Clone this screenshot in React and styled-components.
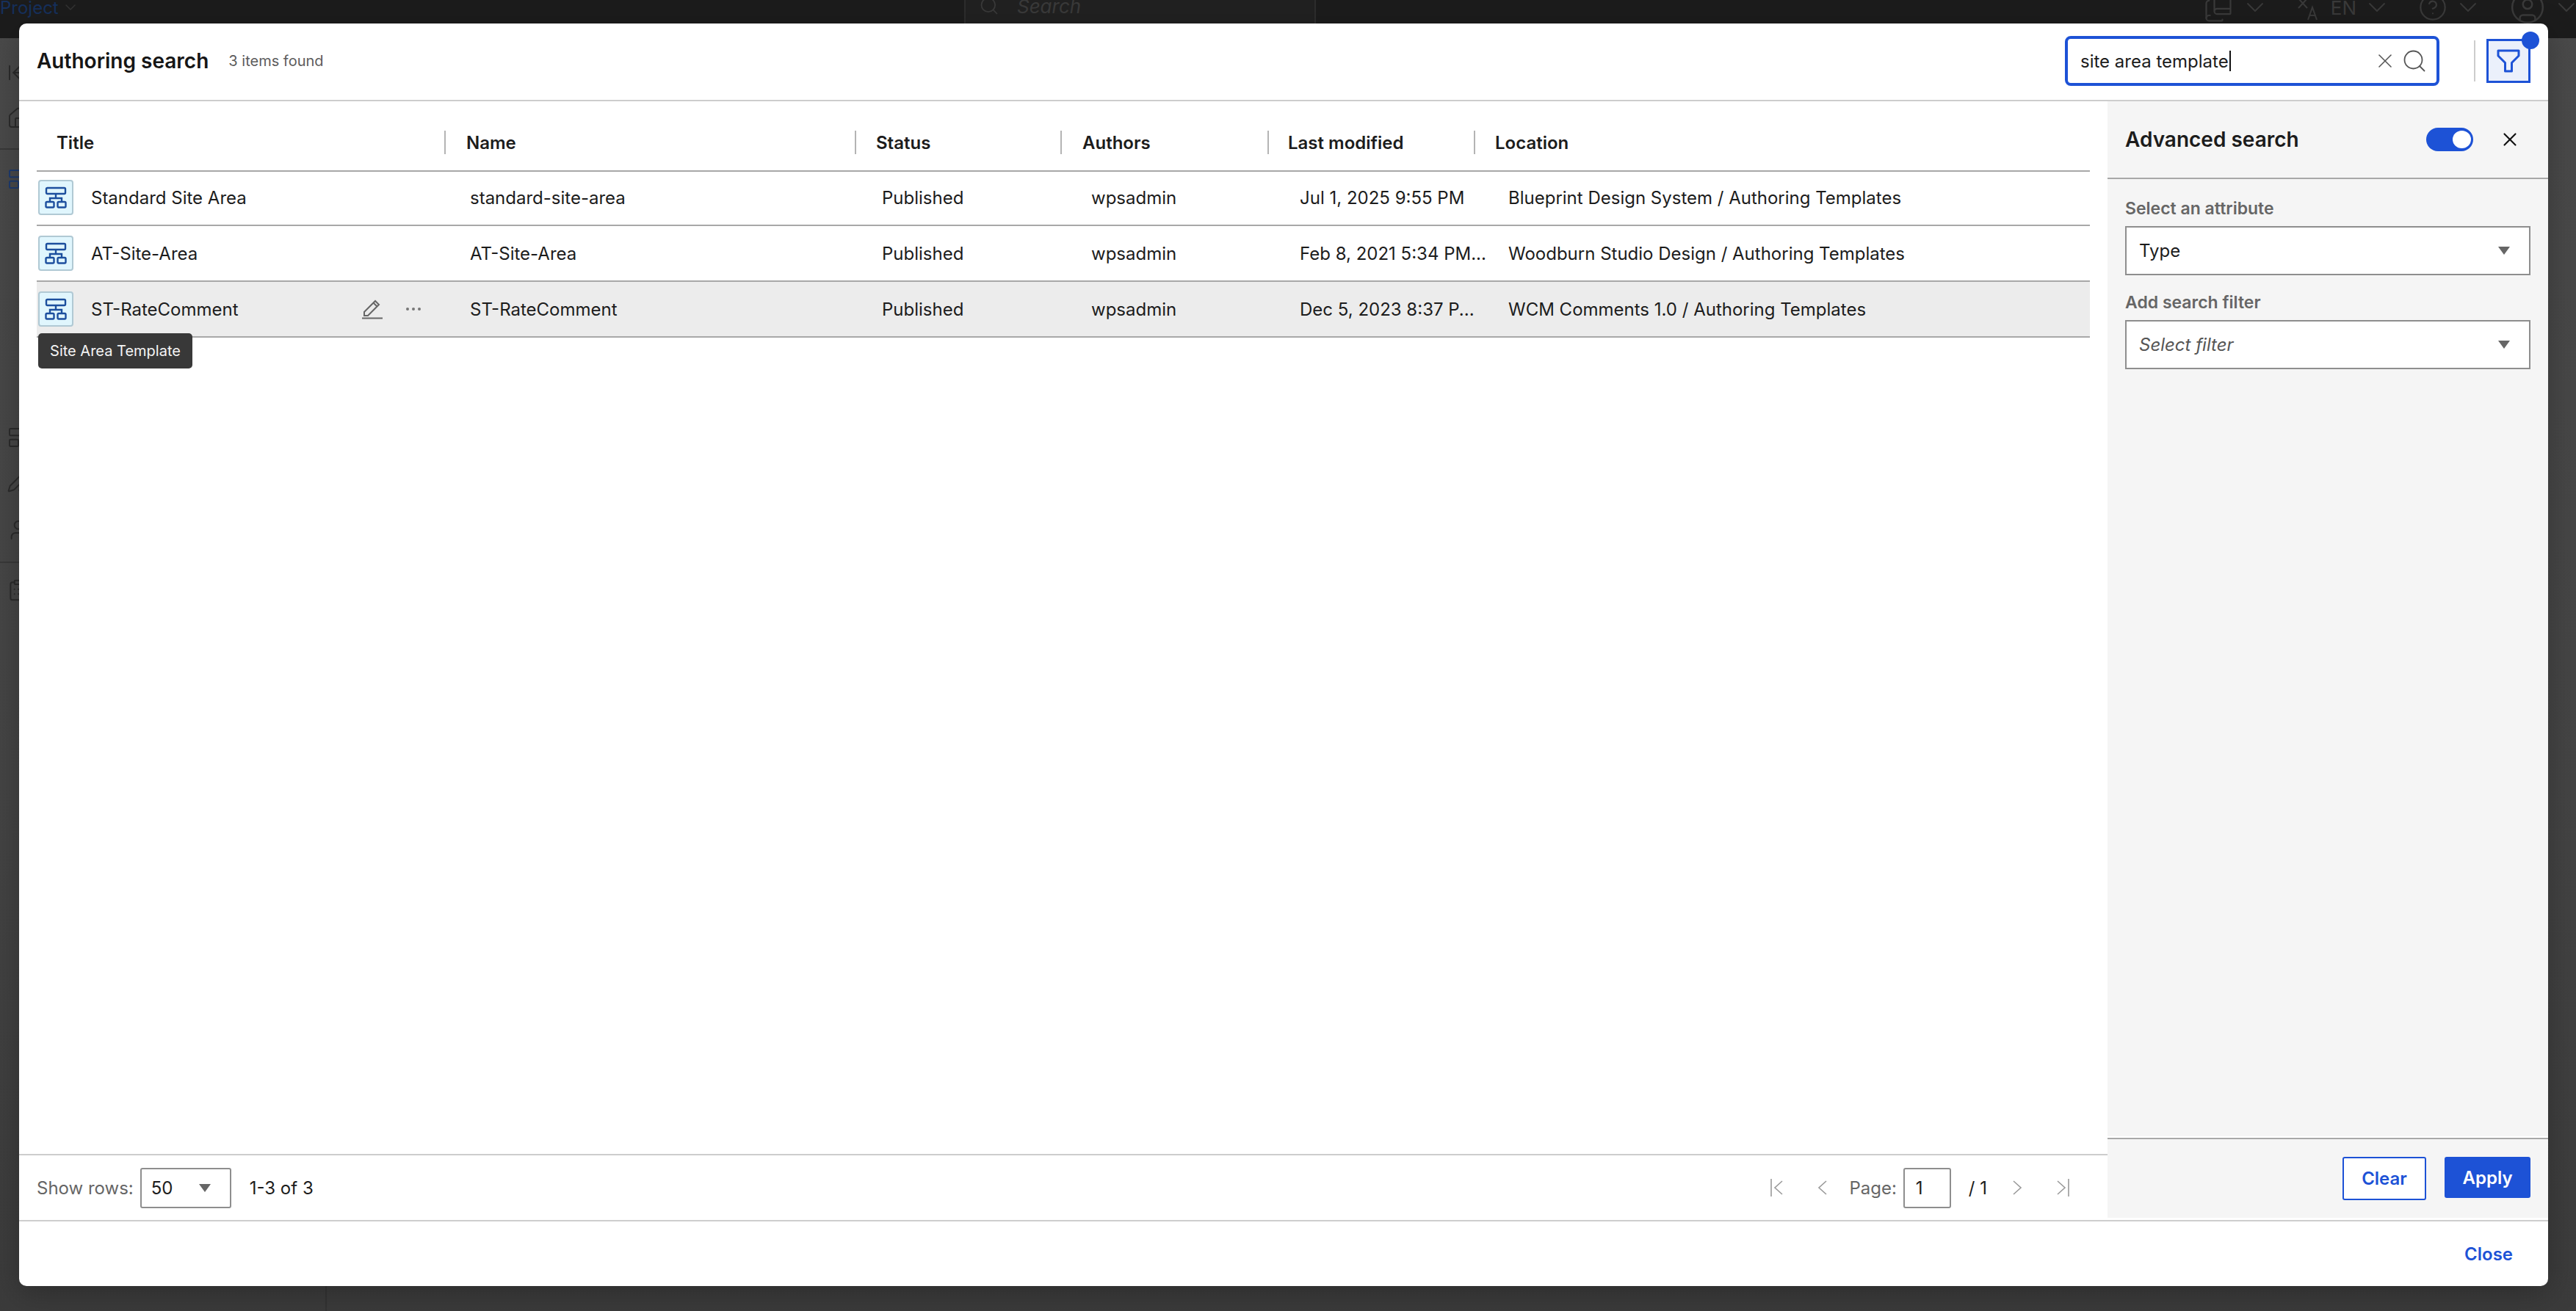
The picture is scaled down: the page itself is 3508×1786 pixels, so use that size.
import React from 'react'
import styled, { createGlobalStyle } from 'styled-components'
import { ArrowLeftToLine, Home, Search, X, ChevronDown, CircleHelp, CircleUser, BookCopy, LayoutTemplate, PenLine, User, ClipboardList } from 'lucide-react'

const GlobalStyle = createGlobalStyle`
    html, body {
        margin: 0;
        padding: 0;
        height: 100%;
        overflow: hidden;
        background: #474747;
        font-family: Inter, "Liberation Sans", sans-serif;
        color: #1c1c1c;
    }
    * {
        box-sizing: border-box;
    }
`

const columns = '555px 559px 280px 282px 281px 1fr'

const headers = [
    { label: 'Title', pad: 27, first: true },
    { label: 'Name', pad: 28 },
    { label: 'Status', pad: 27 },
    { label: 'Authors', pad: 28 },
    { label: 'Last modified', pad: 26 },
    { label: 'Location', pad: 27 },
]

const rows = [
    { title: 'Standard Site Area', name: 'standard-site-area', modified: 'Jul 1, 2025 9:55 PM', location: 'Blueprint Design System / Authoring Templates', first: true },
    { title: 'AT-Site-Area', name: 'AT-Site-Area', modified: 'Feb 8, 2021 5:34 PM...', location: 'Woodburn Studio Design / Authoring Templates' },
    { title: 'ST-RateComment', name: 'ST-RateComment', modified: 'Dec 5, 2023 8:37 P...', location: 'WCM Comments 1.0 / Authoring Templates', hovered: true },
]

function SiteAreaIcon() {
    return (
        <svg width="30" height="30" viewBox="0 0 30 30" fill="none" stroke="#1c4f9e" strokeWidth="2.4">
            <rect x="2" y="2" width="26" height="8" rx="1.5" />
            <path d="M15 10v6M7 21v-5h16v5" />
            <rect x="1.5" y="21" width="11" height="7.5" rx="1.5" />
            <rect x="17.5" y="21" width="11" height="7.5" rx="1.5" />
        </svg>
    )
}

function FilterIcon() {
    return (
        <svg width="32" height="32" viewBox="0 0 32 32" fill="none" stroke="#1d52d6" strokeWidth="3" strokeLinejoin="round">
            <path d="M2 2h28v7L20.500 18.500V30h-9V18.500L2 9z" />
        </svg>
    )
}

function EditIcon() {
    return (
        <svg width="28" height="27" viewBox="0 0 28 27" fill="none" stroke="#666" strokeWidth="2">
            <path d="M3 22v-5L18 2l5 5L8 22z" />
            <path d="M15.500 4.500l5 5" />
            <path d="M0 25.500h28" />
        </svg>
    )
}

// thin page arrows, flip turns the "first/prev" pair into "next/last"
function PageArrow({ edge, flip }) {
    return (
        <PageArrowSvg width={edge ? 18 : 14} height="24" viewBox={edge ? '0 0 18 24' : '0 0 14 24'} fill="none" stroke="#999" strokeWidth="1.6" $flip={flip}>
            {edge && <path d="M1 0v24" />}
            <path d={edge ? 'M16 3L6 12l10 9' : 'M12 3L2 12l10 9'} />
        </PageArrowSvg>
    )
}

function TranslateIcon() {
    return (
        <svg width="32" height="36" viewBox="0 0 32 36" fill="none" stroke="currentColor" strokeWidth="2">
            <path d="M1 2h16M3 6l12 13M15 6L3 19" />
            <path d="M16 35l6-17 6 17M18 29h8" />
        </svg>
    )
}

function App() {
    return (
        <Page>
            <GlobalStyle />
            <TopBar>
                <Brand>
                    Project
                    <ChevronDown size={24} strokeWidth={1.5} />
                </Brand>
                <BackSearch>
                    <Search size={28} strokeWidth={1.5} />
                    <span>Search</span>
                </BackSearch>
                <TopTools>
                    <BookCopy size={44} strokeWidth={1.2} />
                    <TopChevron size={40} strokeWidth={1.1} />
                    <TranslateIcon />
                    <EnLabel>EN</EnLabel>
                    <TopChevron size={40} strokeWidth={1.1} />
                    <CircleHelp size={40} strokeWidth={1.3} />
                    <TopChevron size={40} strokeWidth={1.1} />
                    <CircleUser size={50} strokeWidth={1.2} />
                    <TopChevron size={40} strokeWidth={1.1} />
                </TopTools>
            </TopBar>
            <SideLine />
            <BackRail>
                <RailIcon $gap={0}><ArrowLeftToLine size={32} strokeWidth={1.5} /></RailIcon>
                <RailIcon $gap={30}><Home size={32} strokeWidth={1.5} /></RailIcon>
                <RailRule $gap={25} />
                <RailIcon $gap={24} $active><LayoutTemplate size={32} strokeWidth={1.5} /></RailIcon>
                <RailIcon $gap={320}><LayoutTemplate size={32} strokeWidth={1.5} /></RailIcon>
                <RailIcon $gap={28}><PenLine size={32} strokeWidth={1.5} /></RailIcon>
                <RailIcon $gap={34}><User size={32} strokeWidth={1.5} /></RailIcon>
                <RailRule $gap={27} />
                <RailIcon $gap={21}><ClipboardList size={32} strokeWidth={1.5} /></RailIcon>
            </BackRail>

            <Modal>
                <ModalHeader>
                    <ModalTitle>Authoring search</ModalTitle>
                    <ItemCount>3 items found</ItemCount>
                    <SearchBox>
                        <SearchText>site area template<Caret /></SearchText>
                        <X size={32} strokeWidth={1.2} color="#555" />
                        <Search size={36} strokeWidth={1.2} color="#555" />
                    </SearchBox>
                    <HeaderDivider />
                    <FilterButton>
                        <FilterIcon />
                        <FilterBadge />
                    </FilterButton>
                </ModalHeader>

                <ModalBody>
                    <Results>
                        <TableArea>
                            <HeadRow>
                                {headers.map(h => (
                                    <HeadCell key={h.label} $pad={h.pad} $first={h.first}>{h.label}</HeadCell>
                                ))}
                            </HeadRow>
                            {rows.map(r => (
                                <Row key={r.name} $hovered={r.hovered} $first={r.first}>
                                    <TitleCell>
                                        <TypeBadge><SiteAreaIcon /></TypeBadge>
                                        {r.title}
                                        {r.hovered && (
                                            <RowActions>
                                                <EditIcon />
                                                <Dots>
                                                    <i /><i /><i />
                                                </Dots>
                                            </RowActions>
                                        )}
                                        {r.hovered && <Tooltip>Site Area Template</Tooltip>}
                                    </TitleCell>
                                    <Cell $pad={35}>{r.name}</Cell>
                                    <Cell $pad={37}>Published</Cell>
                                    <Cell $pad={42}>wpsadmin</Cell>
                                    <Cell $pad={44}>{r.modified}</Cell>
                                    <Cell $pad={47}>{r.location}</Cell>
                                </Row>
                            ))}
                        </TableArea>
                        <Pager>
                            <MutedLabel>Show rows:</MutedLabel>
                            <RowsSelect>
                                50
                                <Arrow />
                            </RowsSelect>
                            <RangeLabel>1-3 of 3</RangeLabel>
                            <PageNav>
                                <PageArrow edge />
                                <PageArrow />
                                <PageField>
                                    <MutedLabel>Page:</MutedLabel>
                                    <PageInput>1</PageInput>
                                    <span>/ 1</span>
                                </PageField>
                                <PageArrow flip />
                                <PageArrow edge flip />
                            </PageNav>
                        </Pager>
                    </Results>

                    <Panel>
                        <PanelHead>
                            <PanelTitle>Advanced search</PanelTitle>
                            <Toggle><Knob /></Toggle>
                            <X size={30} strokeWidth={1.7} color="#111" />
                        </PanelHead>
                        <PanelBody>
                            <FieldLabel>Select an attribute</FieldLabel>
                            <PanelSelect>
                                Type
                                <Arrow />
                            </PanelSelect>
                            <FieldLabel>Add search filter</FieldLabel>
                            <PanelSelect $placeholder>
                                Select filter
                                <Arrow />
                            </PanelSelect>
                        </PanelBody>
                        <PanelFooter>
                            <ClearButton>Clear</ClearButton>
                            <ApplyButton>Apply</ApplyButton>
                        </PanelFooter>
                    </Panel>
                </ModalBody>

                <ModalFooter>
                    <CloseLink>Close</CloseLink>
                </ModalFooter>
            </Modal>
        </Page>
    )
}

export default App

const Page = styled.div`
    width: 3508px;
    height: 1786px;
    position: relative;
    overflow: hidden;
    background: linear-gradient(180deg, #4a4a4a 0%, #444 60%, #3b3b3b 100%);
`

const TopBar = styled.div`
    height: 52px;
    background: #1c1c1c;
    display: flex;
    align-items: flex-start;
    color: #3a3a3a;
    overflow: hidden;
`

const Brand = styled.div`
    width: 1313px;
    height: 20px;
    flex: none;
    display: flex;
    align-items: center;
    gap: 4px;
    font-size: 24px;
    color: #16305c;
    svg {
        color: #333;
    }
`

const BackSearch = styled.div`
    width: 479px;
    height: 52px;
    flex: none;
    display: flex;
    align-items: flex-start;
    gap: 24px;
    padding-left: 18px;
    background: #212121;
    border-left: 2px solid #2d2d2d;
    border-right: 2px solid #2d2d2d;
    font-size: 26px;
    font-style: italic;
    line-height: 18px;
    svg {
        margin-top: -6px;
    }
`

const TopTools = styled.div`
    margin-left: auto;
    margin-right: -7px;
    height: 20px;
    display: flex;
    align-items: center;
    font-size: 26px;
`

const TopChevron = styled(ChevronDown)`
    margin: 0 36px 0 8px;
    &:last-child {
        margin-right: 0;
    }
`

const EnLabel = styled.span`
    margin-left: 15px;
`

const SideLine = styled.div`
    position: absolute;
    left: 443px;
    top: 52px;
    bottom: 0;
    width: 2px;
    background: #333;
`

const BackRail = styled.div`
    position: absolute;
    left: 0;
    top: 83px;
    width: 26px;
    display: flex;
    flex-direction: column;
    overflow: hidden;
    color: #2b2b2b;
`

const RailIcon = styled.div`
    height: 32px;
    flex: none;
    margin-top: ${p => p.$gap}px;
    padding-left: 9px;
    color: ${p => (p.$active ? '#1d3a6e' : 'inherit')};
`

const RailRule = styled.div`
    height: 2px;
    flex: none;
    margin-top: ${p => p.$gap}px;
    background: #383838;
`

const Modal = styled.div`
    position: absolute;
    left: 26px;
    top: 32px;
    width: 3444px;
    height: 1720px;
    background: #fff;
    border-radius: 10px;
    box-shadow: 0 10px 40px rgba(0, 0, 0, 0.25);
    display: flex;
    flex-direction: column;
`

const ModalHeader = styled.div`
    height: 106px;
    flex: none;
    display: flex;
    align-items: center;
    padding: 0 24px 2px;
    border-bottom: 2px solid #cdcdcd;
`

const ModalTitle = styled.h1`
    margin: 0;
    font-size: 28px;
    font-weight: 600;
    color: #161616;
`

const ItemCount = styled.span`
    margin-left: 27px;
    font-size: 20px;
    color: #5c5c5c;
`

const SearchBox = styled.div`
    margin-left: auto;
    width: 510px;
    height: 68px;
    display: flex;
    align-items: center;
    gap: 6px;
    padding: 0 12px 0 17px;
    border: 4px solid #1d52d6;
    border-radius: 8px;
`

const SearchText = styled.div`
    flex: 1;
    font-size: 24px;
    display: flex;
    align-items: center;
`

const Caret = styled.span`
    width: 2px;
    height: 28px;
    margin-left: 1px;
    background: #111;
`

const HeaderDivider = styled.div`
    width: 2px;
    height: 56px;
    margin: 0 15px 0 47px;
    background: #cdcdcd;
`

const FilterButton = styled.div`
    width: 60px;
    height: 60px;
    position: relative;
    display: flex;
    align-items: center;
    justify-content: center;
    background: #ebf0fb;
    border: 3px solid #1d52d6;
`

const FilterBadge = styled.span`
    position: absolute;
    top: -13px;
    right: -15px;
    width: 24px;
    height: 24px;
    border-radius: 50%;
    background: #1d52d6;
`

const ModalBody = styled.div`
    flex: 1;
    min-height: 0;
    display: flex;
`

const Results = styled.div`
    flex: 1;
    min-width: 0;
    display: flex;
    flex-direction: column;
`

const TableArea = styled.div`
    flex: 1;
    padding: 0 24px;
`

const HeadRow = styled.div`
    height: 96px;
    display: grid;
    grid-template-columns: ${columns};
    align-items: center;
    border-bottom: 2px solid #a8a8a8;
    padding-top: 18px;
`

const HeadCell = styled.div`
    height: 32px;
    display: flex;
    align-items: center;
    padding-left: ${p => p.$pad}px;
    border-left: ${p => (p.$first ? 'none' : '2px solid #b4b4b4')};
    font-size: 24px;
    font-weight: 600;
    color: #1c1c1c;
`

const Row = styled.div`
    height: ${p => (p.$first ? 74 : 76)}px;
    padding-bottom: ${p => (p.$first ? 2 : 0)}px;
    display: grid;
    grid-template-columns: ${columns};
    align-items: center;
    border-bottom: 2px solid #a8a8a8;
    font-size: 24px;
    background: ${p => (p.$hovered ? '#ececec' : 'transparent')};
`

const Cell = styled.div`
    padding-left: ${p => p.$pad}px;
    white-space: nowrap;
`

const TitleCell = styled.div`
    position: relative;
    display: flex;
    align-items: center;
    padding-left: 2px;
`

const TypeBadge = styled.div`
    width: 48px;
    height: 48px;
    margin-right: 24px;
    display: flex;
    align-items: center;
    justify-content: center;
    background: #e0f6fd;
    border: 2px solid #b0c9d4;
    border-radius: 4px;
`

const RowActions = styled.div`
    margin-left: auto;
    margin-right: 32px;
    display: flex;
    align-items: center;
    gap: 32px;
`

const Dots = styled.div`
    display: flex;
    gap: 4px;
    i {
        width: 4px;
        height: 4px;
        border-radius: 50%;
        background: #777;
    }
`

const Tooltip = styled.div`
    position: absolute;
    left: 2px;
    top: 57px;
    height: 48px;
    width: 210px;
    display: flex;
    align-items: center;
    justify-content: center;
    background: #383838;
    border-radius: 5px;
    color: #f4f4f4;
    font-size: 20px;
    white-space: nowrap;
    z-index: 2;
`

const Pager = styled.div`
    height: 90px;
    flex: none;
    display: flex;
    align-items: center;
    padding: 0 24px;
    border-top: 2px solid #cdcdcd;
    font-size: 24px;
`

const MutedLabel = styled.span`
    color: #666;
`

const RowsSelect = styled.div`
    width: 124px;
    height: 55px;
    margin-left: 9px;
    display: flex;
    align-items: center;
    justify-content: space-between;
    padding: 0 26px 0 13px;
    border: 2px solid #8e8e8e;
    border-radius: 3px;
`

const Arrow = styled.span`
    width: 0;
    height: 0;
    border-left: 8px solid transparent;
    border-right: 8px solid transparent;
    border-top: 11px solid #666;
`

const RangeLabel = styled.span`
    margin-left: 25px;
`

const PageNav = styled.div`
    margin-left: auto;
    display: flex;
    align-items: center;
    gap: 46px;
    padding-right: 28px;
`

const PageArrowSvg = styled.svg`
    transform: ${p => (p.$flip ? 'scaleX(-1)' : 'none')};
`

const PageField = styled.div`
    display: flex;
    align-items: center;
    gap: 9px;
    margin: 0 -12px 0 -17px;
`

const PageInput = styled.div`
    width: 65px;
    height: 55px;
    margin-right: 15px;
    display: flex;
    align-items: center;
    padding-left: 15px;
    border: 2px solid #8e8e8e;
    border-radius: 3px;
`

const Panel = styled.aside`
    width: 600px;
    flex: none;
    display: flex;
    flex-direction: column;
    margin-bottom: 3px;
`

const PanelHead = styled.div`
    height: 106px;
    flex: none;
    display: flex;
    align-items: center;
    padding: 0 37px 0 24px;
    background: #f5f5f5;
    border-bottom: 2px solid #a8a8a8;
`

const PanelTitle = styled.h2`
    margin: 0 auto 0 0;
    font-size: 28px;
    font-weight: 600;
    color: #1c1c1c;
`

const Toggle = styled.div`
    width: 64px;
    height: 32px;
    margin-right: 35px;
    display: flex;
    align-items: center;
    justify-content: flex-end;
    padding-right: 3px;
    border-radius: 16px;
    background: #1d52d6;
`

const Knob = styled.span`
    width: 25px;
    height: 24px;
    border-radius: 50%;
    background: #fff;
`

const PanelBody = styled.div`
    flex: 1;
    margin-bottom: 2px;
    padding: 25px 24px 0;
    background: #f5f5f5;
`

const FieldLabel = styled.div`
    height: 39px;
    font-size: 23px;
    font-weight: 600;
    line-height: 30px;
    color: #666;
`

const PanelSelect = styled.div`
    height: 67px;
    margin-bottom: 22px;
    display: flex;
    align-items: center;
    justify-content: space-between;
    padding: 0 26px 0 17px;
    background: #fff;
    border: 2px solid #8e8e8e;
    font-size: 24px;
    font-style: ${p => (p.$placeholder ? 'italic' : 'normal')};
    color: ${p => (p.$placeholder ? '#555' : '#1c1c1c')};
`

const PanelFooter = styled.div`
    height: 109px;
    flex: none;
    display: flex;
    align-items: flex-start;
    justify-content: flex-end;
    gap: 25px;
    padding: 24px 24px 0;
    background: #f5f5f5;
    border-top: 2px solid #a8a8a8;
`

const ClearButton = styled.div`
    width: 114px;
    height: 59px;
    display: flex;
    align-items: center;
    justify-content: center;
    background: #fff;
    border: 2px solid #1d52d6;
    border-radius: 3px;
    color: #1d52d6;
    font-size: 24px;
    font-weight: 600;
`

const ApplyButton = styled.div`
    width: 117px;
    height: 56px;
    display: flex;
    align-items: center;
    justify-content: center;
    background: #1d52d6;
    border-radius: 3px;
    color: #fff;
    font-size: 24px;
    font-weight: 600;
`

const ModalFooter = styled.div`
    height: 90px;
    flex: none;
    display: flex;
    align-items: center;
    justify-content: flex-end;
    padding: 0 48px;
    border-top: 2px solid #cdcdcd;
`

const CloseLink = styled.div`
    color: #1d52d6;
    font-size: 24px;
    font-weight: 600;
`
